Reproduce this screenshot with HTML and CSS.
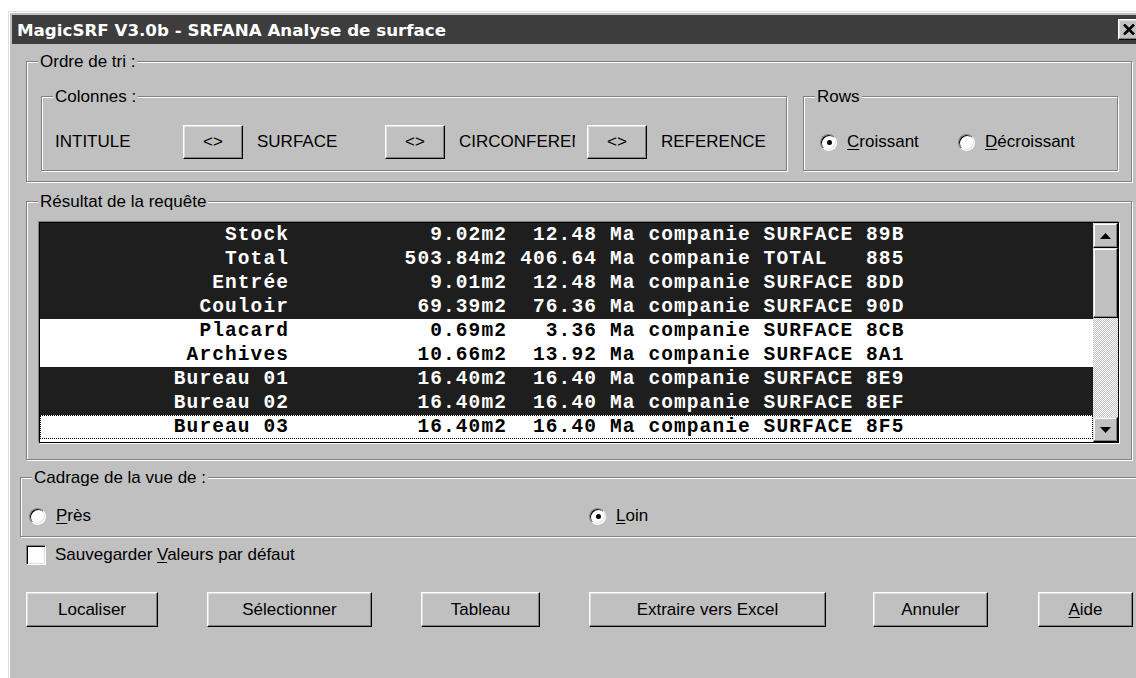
FILE: index.html
```html
<!DOCTYPE html>
<html lang="fr">
<head>
<meta charset="utf-8">
<title>MagicSRF V3.0b - SRFANA Analyse de surface</title>
<link rel="stylesheet" href="styles.css">
</head>
<body>
<div class="window">
  <div class="titlebar">
    <span class="title">MagicSRF V3.0b - SRFANA Analyse de surface</span>
    <button class="close" type="button" aria-label="Fermer">
      <svg width="12" height="11" viewBox="0 0 12 11"><path d="M1 0.5 L11 10.5 M11 0.5 L1 10.5" stroke="#000" stroke-width="2.6" fill="none"/></svg>
    </button>
  </div>

  <div class="client">
    <section class="group ordre">
      <span class="group-title">Ordre de tri :</span>
      <div class="ordre-inner">
        <section class="group colonnes">
          <span class="group-title">Colonnes :</span>
          <div class="col-row">
            <span class="col-label">INTITULE</span>
            <button class="btn btn-sort" type="button">&lt;&gt;</button>
            <span class="col-label">SURFACE</span>
            <button class="btn btn-sort" type="button">&lt;&gt;</button>
            <span class="col-label col-clip">CIRCONFERENCE</span>
            <button class="btn btn-sort" type="button">&lt;&gt;</button>
            <span class="col-label">REFERENCE</span>
          </div>
        </section>
        <section class="group rows">
          <span class="group-title">Rows</span>
          <div class="rows-row">
            <span class="opt opt-asc"><span class="radio on"></span><span><u>C</u>roissant</span></span>
            <span class="opt"><span class="radio"></span><span><u>D</u>écroissant</span></span>
          </div>
        </section>
      </div>
    </section>

    <section class="group resultat">
      <span class="group-title">Résultat de la requête</span>
      <div class="listbox">
        <div class="items">
          <div class="item sel"><span class="c-name">Stock</span><span class="c-surf">9.02m2</span><span class="c-circ">12.48</span><span class="c-rest">Ma companie SURFACE 89B</span></div>
          <div class="item sel"><span class="c-name">Total</span><span class="c-surf">503.84m2</span><span class="c-circ">406.64</span><span class="c-rest">Ma companie TOTAL   885</span></div>
          <div class="item sel"><span class="c-name">Entrée</span><span class="c-surf">9.01m2</span><span class="c-circ">12.48</span><span class="c-rest">Ma companie SURFACE 8DD</span></div>
          <div class="item sel"><span class="c-name">Couloir</span><span class="c-surf">69.39m2</span><span class="c-circ">76.36</span><span class="c-rest">Ma companie SURFACE 90D</span></div>
          <div class="item"><span class="c-name">Placard</span><span class="c-surf">0.69m2</span><span class="c-circ">3.36</span><span class="c-rest">Ma companie SURFACE 8CB</span></div>
          <div class="item"><span class="c-name">Archives</span><span class="c-surf">10.66m2</span><span class="c-circ">13.92</span><span class="c-rest">Ma companie SURFACE 8A1</span></div>
          <div class="item sel"><span class="c-name">Bureau 01</span><span class="c-surf">16.40m2</span><span class="c-circ">16.40</span><span class="c-rest">Ma companie SURFACE 8E9</span></div>
          <div class="item sel"><span class="c-name">Bureau 02</span><span class="c-surf">16.40m2</span><span class="c-circ">16.40</span><span class="c-rest">Ma companie SURFACE 8EF</span></div>
          <div class="item focus"><span class="c-name">Bureau 03</span><span class="c-surf">16.40m2</span><span class="c-circ">16.40</span><span class="c-rest">Ma companie SURFACE 8F5</span></div>
        </div>
        <div class="scrollbar">
          <div class="sb-btn"><svg width="11" height="6" viewBox="0 0 11 6"><polygon points="0,6 5.5,0 11,6" fill="#000"/></svg></div>
          <div class="sb-thumb"></div>
          <div class="sb-track"></div>
          <div class="sb-btn"><svg width="11" height="6" viewBox="0 0 11 6"><polygon points="0,0 11,0 5.5,6" fill="#000"/></svg></div>
        </div>
      </div>
    </section>

    <section class="group cadrage">
      <span class="group-title">Cadrage de la vue de :</span>
      <div class="cadrage-row">
        <span class="opt opt-pres"><span class="radio"></span><span><u>P</u>rès</span></span>
        <span class="opt"><span class="radio on"></span><span><u>L</u>oin</span></span>
      </div>
    </section>

    <div class="check-row">
      <span class="check"></span>
      <span>Sauvegarder <u>V</u>aleurs par défaut</span>
    </div>

    <div class="buttons">
      <button class="btn b-loc" type="button">Localiser</button>
      <button class="btn b-sel" type="button">Sélectionner</button>
      <button class="btn b-tab" type="button">Tableau</button>
      <button class="btn b-xls" type="button">Extraire vers Excel</button>
      <button class="btn b-ann" type="button">Annuler</button>
      <button class="btn b-aide" type="button"><u>A</u>ide</button>
    </div>
  </div>
</div>
</body>
</html>
```

FILE: styles.css
```css
* { box-sizing: border-box; }

html, body {
  margin: 0;
  height: 100%;
  overflow: hidden;
  background: #fff;
}

body {
  font-family: "Liberation Sans", Arial, sans-serif;
  font-size: 17px;
  color: #000;
}

u { text-decoration-thickness: 1px; text-underline-offset: 2px; }

/* ---------- window frame ---------- */
.window {
  margin: 11px 0 0 8px;
  width: 1140px;
  height: 720px;
  background: #c0c0c0;
  border-top: 1px solid #dfdfdf;
  border-left: 1px solid #dfdfdf;
  box-shadow: inset 1px 1px 0 #fff;
  padding: 3px 0 0 3px;
}

.titlebar {
  display: flex;
  align-items: flex-start;
  height: 29px;
  background: #3d3d3d;
  color: #fff;
  font-family: "DejaVu Sans", Verdana, sans-serif;
  font-weight: bold;
  font-size: 16.7px;
}

.title {
  padding: 2px 0 0 5px;
  line-height: 27px;
  white-space: nowrap;
}

.close {
  margin: 4px 6px 0 auto;
  width: 24px;
  height: 21px;
  padding: 0 0 0 4px;
  display: flex;
  align-items: center;
  justify-content: flex-start;
  background: #c0c0c0;
  border: 1px solid;
  border-color: #fff #000 #000 #fff;
  box-shadow: inset -1px -1px 0 #808080, inset 1px 1px 0 #dfdfdf;
}

.client {
  padding: 17px 0 0 14px;
}

/* ---------- etched group boxes ---------- */
.group {
  position: relative;
  border: 1px solid #808080;
  box-shadow: 1px 1px 0 #fff, inset 1px 1px 0 #fff;
}

.group-title {
  position: absolute;
  top: -11px;
  left: 11px;
  padding: 0 2px;
  background: #c0c0c0;
  line-height: 22px;
  white-space: nowrap;
}

.ordre {
  width: 1106px;
  height: 121px;
}

.ordre-inner {
  display: flex;
  gap: 16px;
  padding: 34px 0 0 14px;
}

.colonnes {
  flex: none;
  width: 746px;
  height: 75px;
  padding: 28px 0 0 13px;
}

.col-row {
  display: flex;
  align-items: center;
  height: 34px;
}

.col-label {
  flex: none;
  width: 114px;
  margin-right: 14px;
  overflow: hidden;
  white-space: nowrap;
}

.col-label.col-clip {
  width: 116px;
  margin-right: 12px;
}

.rows {
  flex: none;
  width: 315px;
  height: 75px;
  padding: 28px 0 0 16px;
}

.rows-row,
.cadrage-row {
  display: flex;
  align-items: center;
  height: 34px;
}

.opt {
  display: flex;
  align-items: center;
  gap: 10px;
  white-space: nowrap;
}

.opt-asc { width: 138px; }

.radio {
  position: relative;
  flex: none;
  width: 17px;
  height: 17px;
  border-radius: 50%;
  background: #fff;
  border: 1px solid;
  border-color: #808080 #fff #fff #808080;
  box-shadow: inset 1px 1px 0 #000, inset -1px -1px 0 #dfdfdf;
}

.radio.on::after {
  content: "";
  position: absolute;
  left: 50%;
  top: 50%;
  width: 5px;
  height: 5px;
  margin: -2px 0 0 -2px;
  border-radius: 50%;
  background: #000;
}

/* ---------- result list ---------- */
.resultat {
  margin-top: 19px;
  width: 1106px;
  height: 259px;
  padding: 20px 0 0 12px;
}

.listbox {
  display: flex;
  width: 1080px;
  height: 221px;
  background: #fff;
  border: 1px solid #000;
  box-shadow: -1px -1px 0 #808080, 1px 1px 0 #fff;
}

.items {
  flex: 1;
  font-family: "Liberation Mono", "DejaVu Sans Mono", monospace;
  font-weight: bold;
  font-size: 19.5px;
  letter-spacing: 1.1px;
}

.item {
  display: flex;
  height: 24px;
  line-height: 25px;
  white-space: pre;
  color: #000;
  background: #fff;
}

.item.sel {
  background: #1e1e1e;
  color: #fff;
}

.item.focus {
  outline: 1px dotted #000;
  outline-offset: -1px;
}

.c-name { width: 249px; text-align: right; }
.c-surf { width: 218px; text-align: right; }
.c-circ { width: 90px; text-align: right; }
.c-rest { padding-left: 13px; }

.scrollbar {
  display: flex;
  flex-direction: column;
  width: 25px;
  flex: none;
}

.sb-btn,
.sb-thumb {
  flex: none;
  background: #c0c0c0;
  border: 1px solid;
  border-color: #dfdfdf #000 #000 #dfdfdf;
  box-shadow: inset -1px -1px 0 #808080, inset 1px 1px 0 #fff;
}

.sb-btn {
  height: 25px;
  display: flex;
  align-items: center;
  justify-content: center;
}

.sb-thumb { height: 70px; }

.sb-track {
  flex: 1;
  background: repeating-conic-gradient(#fff 0 25%, #c0c0c0 0 50%) 0 0 / 2px 2px;
}

/* ---------- view framing ---------- */
.cadrage {
  margin: 17px 0 0 -6px;
  width: 1140px;
  height: 60px;
  padding: 21px 0 0 8px;
}

.opt-pres { width: 560px; }

.check-row {
  display: flex;
  align-items: center;
  gap: 9px;
  margin-top: 8px;
  height: 20px;
}

.check {
  flex: none;
  width: 20px;
  height: 20px;
  background: #fff;
  border: 1px solid;
  border-color: #808080 #fff #fff #808080;
  box-shadow: inset 1px 1px 0 #000, inset -1px -1px 0 #dfdfdf;
}

/* ---------- push buttons ---------- */
.btn {
  font: inherit;
  color: #000;
  padding: 0;
  background: #c0c0c0;
  border: 1px solid;
  border-color: #fff #000 #000 #fff;
  box-shadow: inset -1px -1px 0 #808080, inset 1px 1px 0 #dfdfdf;
  white-space: nowrap;
}

.btn-sort {
  flex: none;
  width: 60px;
  height: 34px;
  margin-right: 14px;
}

.buttons {
  display: flex;
  margin-top: 27px;
}

.buttons .btn {
  flex: none;
  height: 35px;
  margin-right: 49px;
}

.b-loc { width: 132px; }
.b-sel { width: 165px; }
.b-tab { width: 119px; }
.buttons .b-xls { width: 237px; margin-right: 47px; }
.buttons .b-ann { width: 115px; margin-right: 50px; }
.b-aide { width: 95px; }
```
